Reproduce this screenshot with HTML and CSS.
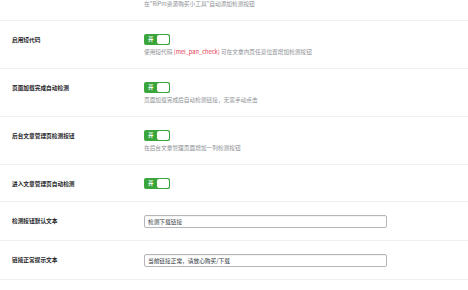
FILE: index.html
```html
<!DOCTYPE html>
<html lang="zh-CN">
<head>
    <meta charset="UTF-8">
    <meta name="viewport" content="width=device-width, initial-scale=1.0">
    <title>网盘检测设置</title>
    <link rel="stylesheet" href="styles.css">
</head>
<body>
    <div class="settings">
        <div class="row row-tail">
            <div class="label"></div>
            <div class="field">
                <p class="help">在"RiPro资源购买小工具"自动添加检测按钮</p>
            </div>
        </div>

        <div class="row">
            <div class="label">启用短代码</div>
            <div class="field">
                <span class="switch"><span class="switch-text">开</span><span class="knob"></span></span>
                <p class="help">使用短代码 <span class="code">[mel_pan_check]</span> 可在文章内页任意位置增加检测按钮</p>
            </div>
        </div>

        <div class="row">
            <div class="label">页面加载完成自动检测</div>
            <div class="field">
                <span class="switch"><span class="switch-text">开</span><span class="knob"></span></span>
                <p class="help">页面加载完成后自动检测链接，无需手动点击</p>
            </div>
        </div>

        <div class="row">
            <div class="label">后台文章管理页检测按钮</div>
            <div class="field">
                <span class="switch"><span class="switch-text">开</span><span class="knob"></span></span>
                <p class="help">在后台文章管理页面增加一列检测按钮</p>
            </div>
        </div>

        <div class="row">
            <div class="label">进入文章管理页自动检测</div>
            <div class="field">
                <span class="switch"><span class="switch-text">开</span><span class="knob"></span></span>
            </div>
        </div>

        <div class="row">
            <div class="label">检测按钮默认文本</div>
            <div class="field">
                <input class="text-input" type="text" value="检测下载链接">
            </div>
        </div>

        <div class="row">
            <div class="label">链接正常提示文本</div>
            <div class="field">
                <input class="text-input" type="text" value="当前链接正常，请放心购买/下载">
            </div>
        </div>
    </div>
</body>
</html>
```

FILE: styles.css
```css
body {
    margin: 0;
    background: #fff;
    font-family: "Noto Sans CJK SC", "Liberation Sans", sans-serif;
    color: #1d2327;
}
.settings {
    width: 468px;
}
.row {
    display: grid;
    grid-template-columns: 144px 1fr;
    padding: 13px 0 12px;
    border-bottom: 1px solid #f0f0f1;
}
.row-tail {
    padding: 0 0 12px;
}
.label {
    padding-left: 12px;
    font-size: 5.7px;
    font-weight: bold;
    line-height: 11px;
    color: #1d2327;
}
.field {
    display: flex;
    flex-direction: column;
    align-items: flex-start;
}
.help {
    margin: 3px 0 0;
    font-size: 5.7px;
    line-height: 8px;
    color: #8c8f94;
}
.row-tail .help {
    margin-top: 0;
}
.code {
    color: #e2364f;
}
.switch {
    position: relative;
    display: inline-flex;
    align-items: center;
    width: 26px;
    height: 11px;
    box-sizing: border-box;
    background: #3aa53a;
    border-radius: 2px;
}
.switch-text {
    padding-left: 4px;
    font-size: 5.5px;
    font-weight: bold;
    color: #fff;
    line-height: 11px;
}
.knob {
    position: absolute;
    top: 1px;
    right: 1px;
    width: 12px;
    height: 9px;
    background: #fff;
    border-radius: 2px;
}
.text-input {
    width: 243px;
    height: 13px;
    box-sizing: border-box;
    margin: 0;
    padding: 0 3px;
    border: 1px solid #b4b6ba;
    border-radius: 2px;
    box-shadow: inset 0 1px 1px rgba(0,0,0,0.05);
    font-family: "Noto Sans CJK SC", "Liberation Sans", sans-serif;
    font-size: 5.7px;
    color: #2c3338;
    background: #fff;
}
```
